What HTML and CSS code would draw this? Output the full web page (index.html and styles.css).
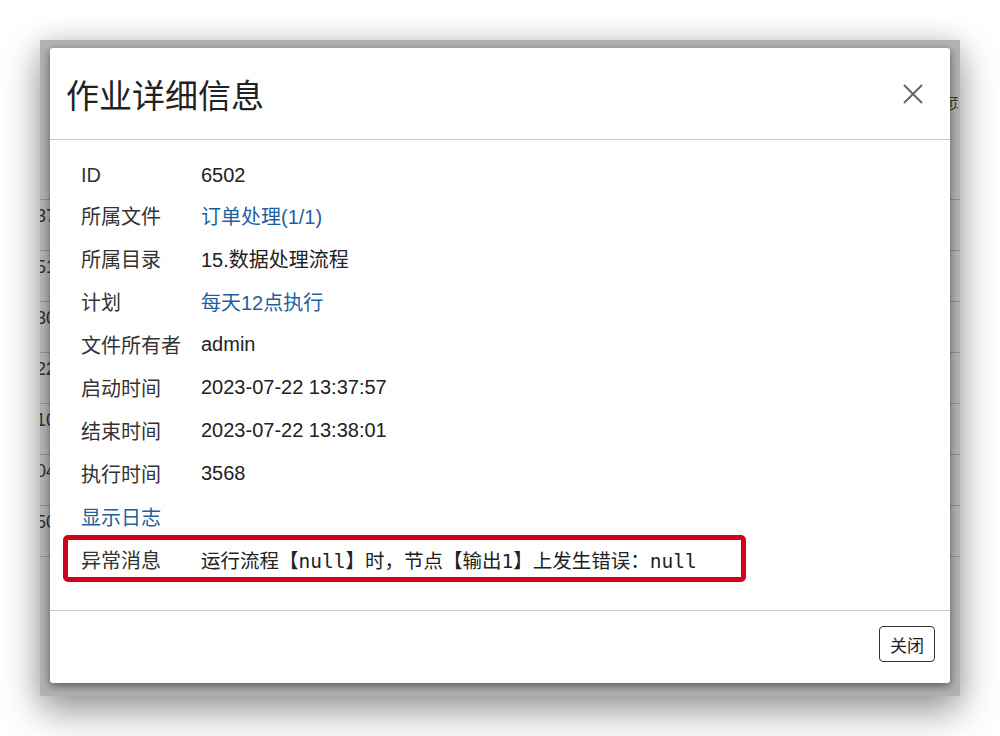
FILE: index.html
```html
<!DOCTYPE html>
<html lang="zh-CN">
<head>
<meta charset="UTF-8">
<meta name="viewport" content="width=device-width, initial-scale=1.0">
<title>作业详细信息</title>
<link rel="stylesheet" href="styles.css">
</head>
<body>

  <div class="shot">
    <!-- page behind the dialog -->
    <div class="bg-page">
      <div class="bg-head"><span class="bg-head-text">页</span></div>
      <div class="bg-row"><span class="bg-cell">37</span></div>
      <div class="bg-row"><span class="bg-cell">51</span></div>
      <div class="bg-row"><span class="bg-cell">30</span></div>
      <div class="bg-row"><span class="bg-cell">22</span></div>
      <div class="bg-row"><span class="bg-cell">10</span></div>
      <div class="bg-row"><span class="bg-cell">04</span></div>
      <div class="bg-row"><span class="bg-cell">50</span></div>
      <div class="bg-row"><span class="bg-cell"></span></div>
    </div>

    <div class="backdrop"></div>

    <div class="modal">
      <div class="modal-header">
        <h4 class="modal-title">作业详细信息</h4>
        <button class="close" aria-label="关闭">
          <svg width="20" height="20" viewBox="0 0 20 20">
            <path d="M1 1 L19 19 M19 1 L1 19" stroke="#666" stroke-width="2" fill="none"/>
          </svg>
        </button>
      </div>

      <div class="modal-body">
        <div class="info-row first">
          <span class="info-label">ID</span>
          <span class="info-value">6502</span>
        </div>
        <div class="info-row">
          <span class="info-label">所属文件</span>
          <a class="info-value link" href="#">订单处理(1/1)</a>
        </div>
        <div class="info-row">
          <span class="info-label">所属目录</span>
          <span class="info-value">15.数据处理流程</span>
        </div>
        <div class="info-row">
          <span class="info-label">计划</span>
          <a class="info-value link" href="#">每天12点执行</a>
        </div>
        <div class="info-row">
          <span class="info-label">文件所有者</span>
          <span class="info-value">admin</span>
        </div>
        <div class="info-row">
          <span class="info-label">启动时间</span>
          <span class="info-value">2023-07-22 13:37:57</span>
        </div>
        <div class="info-row">
          <span class="info-label">结束时间</span>
          <span class="info-value">2023-07-22 13:38:01</span>
        </div>
        <div class="info-row">
          <span class="info-label">执行时间</span>
          <span class="info-value">3568</span>
        </div>
        <div class="info-row">
          <a class="link" href="#">显示日志</a>
        </div>
        <div class="info-row error">
          <span class="info-label">异常消息</span>
          <span class="info-value mono">运行流程【null】时，节点【输出1】上发生错误：null</span>
          <span class="highlight"></span>
        </div>
      </div>

      <div class="modal-footer">
        <button class="btn">关闭</button>
      </div>
    </div>
  </div>

</body>
</html>
```

FILE: styles.css
```css
body {
  margin: 0;
  padding: 40px 0 40px 40px;
  background-color: #fff;
  font-family: "Liberation Sans", "Noto Sans CJK SC", sans-serif;
}

/* screenshot frame */
.shot {
  position: relative;
  width: 920px;
  height: 656px;
  overflow: hidden;
  background-color: #fff;
  box-shadow: 0 16px 36px rgba(0, 0, 0, 0.38), 0 0 24px rgba(0, 0, 0, 0.12);
}

.bg-page {
  color: #444;
  font-size: 18px;
}

.bg-head {
  height: 159px;
  display: flex;
  justify-content: flex-end;
  align-items: flex-start;
}

.bg-head-text {
  display: block;
  width: 10px;
  overflow: hidden;
  margin: 52px 2px 0 0;
  font-size: 15px;
  color: #555;
}

.bg-row {
  height: 50px;
  border-top: 1px solid #ccc;
}

.bg-cell {
  display: block;
  margin-left: -4px;
  padding-top: 6px;
}

.backdrop {
  position: absolute;
  inset: 0;
  background-color: rgba(0, 0, 0, 0.3);
}

/* dialog */
.modal {
  position: absolute;
  top: 8px;
  left: 10px;
  width: 900px;
  height: 635px;
  background-color: #fff;
  border-radius: 3px;
  box-shadow: 0 3px 10px rgba(0, 0, 0, 0.5);
  display: flex;
  flex-direction: column;
  color: #333;
}

.modal-header {
  height: 91px;
  display: flex;
  align-items: center;
  justify-content: space-between;
  padding: 0 27px 0 16px;
  border-bottom: 1px solid #c8c8c8;
}

.modal-title {
  margin: 0;
  font-family: "Noto Sans CJK SC", sans-serif;
  font-size: 33px;
  font-weight: 400;
  color: #222;
}

.close {
  border: none;
  background: none;
  padding: 0;
  width: 20px;
  height: 20px;
  cursor: pointer;
}

.close svg {
  display: block;
}

.modal-body {
  padding: 16px 31px 29px 31px;
}

.info-row {
  position: relative;
  display: flex;
  align-items: center;
  height: 43px;
  font-size: 20px;
}

.info-row.first {
  height: 38px;
}

.info-label {
  width: 120px;
  flex-shrink: 0;
  color: #333;
}

.info-value {
  color: #222;
}

.link {
  color: #1f5f9f;
  text-decoration: none;
}

.mono {
  font-family: "DejaVu Sans Mono", "Noto Sans CJK SC", monospace;
  font-size: 19.5px;
  color: #222;
}

/* red annotation box */
.highlight {
  position: absolute;
  top: -3px;
  left: -18px;
  width: 683px;
  height: 47px;
  box-sizing: border-box;
  border: 5px solid #d0021b;
  border-radius: 5px;
}

.modal-footer {
  flex: 1;
  display: flex;
  justify-content: flex-end;
  align-items: flex-start;
  padding: 15px 15px 0 0;
  border-top: 1px solid #c8c8c8;
}

.btn {
  height: 36px;
  padding: 0 10px;
  background-color: #fff;
  border: 1px solid #333;
  border-radius: 4px;
  font-family: "Noto Sans CJK SC", sans-serif;
  font-size: 17px;
  color: #222;
  cursor: pointer;
}
```
